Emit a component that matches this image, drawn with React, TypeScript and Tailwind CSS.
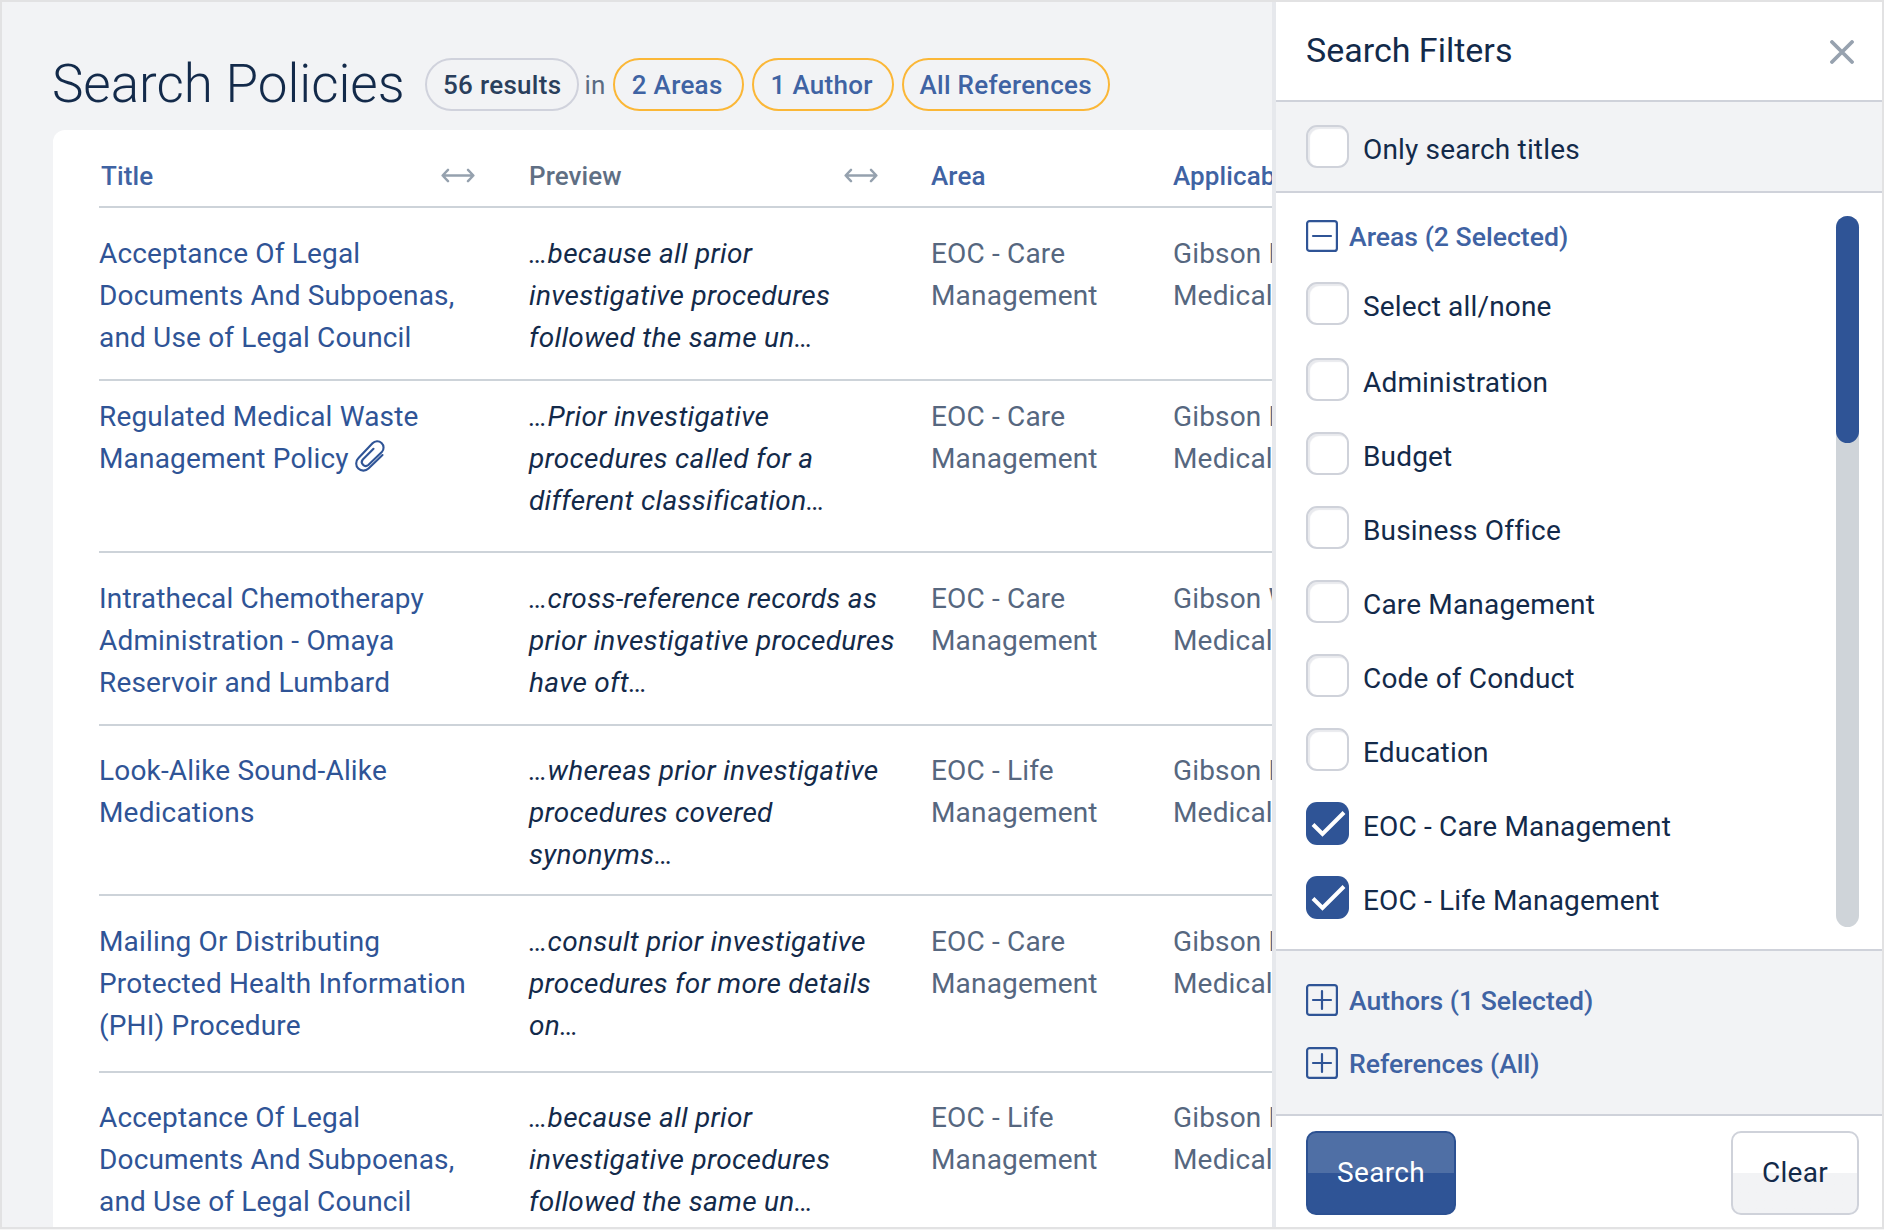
import { useState } from 'react';
import clsx from 'clsx';

type Policy = {
  title: string[];
  preview: string[];
  area: string[];
  applicability: string[];
  attachment?: boolean;
  rowClass: string;
};

const policies: Policy[] = [
  {
    title: ['Acceptance Of Legal', 'Documents And Subpoenas,', 'and Use of Legal Council'],
    preview: ['…because all prior', 'investigative procedures', 'followed the same un…'],
    area: ['EOC - Care', 'Management'],
    applicability: ['Gibson Men’s', 'Medical Center'],
    rowClass: 'h-[173px] pt-[25px]',
  },
  {
    title: ['Regulated Medical Waste', 'Management Policy'],
    preview: ['…Prior investigative', 'procedures called for a', 'different classification…'],
    area: ['EOC - Care', 'Management'],
    applicability: ['Gibson Men’s', 'Medical Center'],
    attachment: true,
    rowClass: 'h-[172px] pt-[15px]',
  },
  {
    title: ['Intrathecal Chemotherapy', 'Administration - Omaya', 'Reservoir and Lumbard'],
    preview: ['…cross-reference records as', 'prior investigative procedures', 'have oft…'],
    area: ['EOC - Care', 'Management'],
    applicability: ['Gibson Women’s', 'Medical Center'],
    rowClass: 'h-[173px] pt-[25px]',
  },
  {
    title: ['Look-Alike Sound-Alike', 'Medications'],
    preview: ['…whereas prior investigative', 'procedures covered', 'synonyms…'],
    area: ['EOC - Life', 'Management'],
    applicability: ['Gibson Men’s', 'Medical Center'],
    rowClass: 'h-[170px] pt-[24px]',
  },
  {
    title: ['Mailing Or Distributing', 'Protected Health Information', '(PHI) Procedure'],
    preview: ['…consult prior investigative', 'procedures for more details', 'on…'],
    area: ['EOC - Care', 'Management'],
    applicability: ['Gibson Men’s', 'Medical Center'],
    rowClass: 'h-[177px] pt-[25px]',
  },
  {
    title: ['Acceptance Of Legal', 'Documents And Subpoenas,', 'and Use of Legal Council'],
    preview: ['…because all prior', 'investigative procedures', 'followed the same un…'],
    area: ['EOC - Life', 'Management'],
    applicability: ['Gibson Men’s', 'Medical Center'],
    rowClass: 'h-[173px] pt-[24px]',
  },
];

const areas = [
  'Administration',
  'Budget',
  'Business Office',
  'Care Management',
  'Code of Conduct',
  'Education',
  'EOC - Care Management',
  'EOC - Life Management',
];

const columns = 'grid grid-cols-[430px_402px_242px_300px]';

function ResizeIcon() {
  return (
    <svg className="h-[15px] w-[34px] shrink-0" viewBox="0 0 34 15" fill="none" stroke="#95a1ae" strokeWidth="2.4" strokeLinecap="round" strokeLinejoin="round">
      <path d="M1.8 7.5h30.4M7 1.8 1.6 7.5 7 13.2M27 1.8l5.4 5.7-5.4 5.7" />
    </svg>
  );
}

function PaperclipIcon() {
  return (
    <svg className="ml-[6px] inline-block h-[34px] w-[30px] align-[-5px]" viewBox="0 0 30 34" fill="none" stroke="#2f5496" strokeWidth="2.1" strokeLinecap="round" strokeLinejoin="round">
      <path d="M27.5 16 13.5 29.5A7.2 7.2 0 0 1 3.3 19.3L17.5 4.2A6.4 6.4 0 0 1 26.8 13L13.3 26A3.9 3.9 0 0 1 7.8 20.5L18.5 9.8" />
    </svg>
  );
}

function Lines({ lines }: { lines: string[] }) {
  return (
    <>
      {lines.map((line) => (
        <span key={line} className="block whitespace-nowrap">
          {line}
        </span>
      ))}
    </>
  );
}

function Pill({ children, className }: { children: string; className: string }) {
  return (
    <button
      className={clsx(
        'h-[53px] rounded-full border-2 border-[#fbb737] pt-[2px] font-medium whitespace-nowrap text-[#3f63a3]',
        className,
      )}
    >
      {children}
    </button>
  );
}

function Checkbox({ label, checked, onChange }: { label: string; checked: boolean; onChange: () => void }) {
  return (
    <label className="flex h-[43px] items-center text-[28px] tracking-[0.17px] text-[#132a4a]">
      <input type="checkbox" className="sr-only" checked={checked} onChange={onChange} />
      <span
        className={clsx(
          'flex size-[43px] shrink-0 items-center justify-center rounded-[11px]',
          checked
            ? 'bg-[#2f5496]'
            : 'border-2 border-[#cfd2da] bg-white shadow-[inset_2px_2px_1px_#e9eaee]',
        )}
      >
        {checked && (
          <svg className="size-[43px]" viewBox="0 0 43 43" fill="none" stroke="#fff" strokeWidth="4">
            <path d="M7 22.5 16.5 32 38 10.5" />
          </svg>
        )}
      </span>
      <span className="mt-[6px] ml-[14px] whitespace-nowrap">{label}</span>
    </label>
  );
}

function SectionToggle({ label, open }: { label: string; open?: boolean }) {
  return (
    <button className="flex h-8 items-center gap-[11px] text-[26.6px] font-medium text-[#3f63a3]">
      <svg className="size-8" viewBox="0 0 32 32" fill="none" stroke="#2f5496" strokeWidth="2.2">
        <rect x="1.1" y="1.1" width="29.8" height="29.8" rx="2.5" />
        <path d={open ? 'M7 16h18' : 'M7 16h18M16 7v18'} strokeLinecap="round" />
      </svg>
      <span className="mt-[2px] whitespace-nowrap">{label}</span>
    </button>
  );
}

function Results() {
  return (
    <main className="w-[1270px] shrink-0 overflow-hidden pt-[56px] pl-[51px]">
      <div className="flex h-[53px] items-center text-[26px] tracking-[0.3px]">
        <h1 className="-ml-px w-[373px] shrink-0 text-[53px] font-light tracking-[-0.05px] whitespace-nowrap text-[#132a4a]">
          Search Policies
        </h1>
        <span className="flex h-[53px] items-center rounded-full border-2 border-[#d0d2dc] px-[16px] pt-[2px] font-medium whitespace-nowrap text-[#2a3f5c]">
          56 results
        </span>
        <span className="mr-[7px] ml-[5px] pt-[2px] text-[#5a6b82]">in</span>
        <div className="flex gap-2">
          <Pill className="w-[131px] pr-[2px]">2 Areas</Pill>
          <Pill className="w-[142px] pr-[2px]">1 Author</Pill>
          <Pill className="w-[208px]">All References</Pill>
        </div>
      </div>

      <div className="mt-[19px] h-[1100px] w-[1500px] rounded-tl-xl bg-white pl-[46px]">
        <div className={clsx(columns, 'h-[78px] items-center border-b-2 border-[#cdd3d9] pt-[15px] text-[26px] font-medium tracking-[0.1px] text-[#3f63a3]')}>
          <div className="flex items-center justify-between pr-[54px]">
            <span className="pt-[2px] pl-[2px]">Title</span>
            <ResizeIcon />
          </div>
          <div className="flex items-center justify-between pr-[53px]">
            <span className="pt-[2px] text-[#5f6f84]">Preview</span>
            <ResizeIcon />
          </div>
          <span className="pt-[2px]">Area</span>
          <span className="pt-[2px]">Applicability</span>
        </div>

        {policies.map((policy, i) => (
          <div
            key={i}
            className={clsx(
              columns,
              policy.rowClass,
              'border-b-2 border-[#cdd3d9] text-[28px] leading-[42px] tracking-[0.17px] text-[#56677f]',
            )}
          >
            <a className="text-[#2f5496]">
              {policy.title.map((line, n) => (
                <span key={line} className="block h-[42px] whitespace-nowrap">
                  {line}
                  {policy.attachment && n === policy.title.length - 1 && <PaperclipIcon />}
                </span>
              ))}
            </a>
            <p className="tracking-[0.3px] text-[#132a4a] italic">
              <Lines lines={policy.preview} />
            </p>
            <p>
              <Lines lines={policy.area} />
            </p>
            <p>
              <Lines lines={policy.applicability} />
            </p>
          </div>
        ))}
      </div>
    </main>
  );
}

export default function App() {
  const [titlesOnly, setTitlesOnly] = useState(false);
  const [selected, setSelected] = useState(['EOC - Care Management', 'EOC - Life Management']);

  function toggle(area: string) {
    setSelected((prev) => (prev.includes(area) ? prev.filter((a) => a !== area) : [...prev, area]));
  }

  return (
    <div className="h-[1230px] w-[1884px] overflow-hidden bg-[#f5f5f5]">
      <div className="flex h-[1229px] overflow-hidden border-2 border-[#e2e2e3] bg-[#f2f3f5] font-[Roboto,sans-serif]">
        <Results />

        <aside className="flex w-[610px] shrink-0 flex-col border-l-4 border-[#e6e8ec] bg-white">
          <header className="flex h-[100px] items-center justify-between border-b-2 border-[#cfd2da] pr-[28px] pl-[30px]">
            <h2 className="-mt-[2px] text-[34px] text-[#132a4a]">Search Filters</h2>
            <button aria-label="Close" className="mt-[2px]">
              <svg className="size-[24px]" viewBox="0 0 24 24" fill="none" stroke="#97a2af" strokeWidth="3.8" strokeLinecap="round">
                <path d="M2 2l20 20M22 2 2 22" />
              </svg>
            </button>
          </header>

          <div className="h-[91px] border-b-2 border-[#cfd2da] bg-[#f2f3f5] pt-[23px] pl-[30px]">
            <Checkbox label="Only search titles" checked={titlesOnly} onChange={() => setTitlesOnly(!titlesOnly)} />
          </div>

          <section className="flex h-[758px] justify-between border-b-2 border-[#cfd2da] pt-[23px] pr-[23px] pl-[30px]">
            <div className="pt-[4px]">
              <SectionToggle label="Areas (2 Selected)" open />
              <div className="mt-[30px] mb-[33px]">
                <Checkbox
                  label="Select all/none"
                  checked={selected.length === areas.length}
                  onChange={() => setSelected(selected.length === areas.length ? [] : areas)}
                />
              </div>
              <div className="flex flex-col gap-[31px]">
                {areas.map((area) => (
                  <Checkbox key={area} label={area} checked={selected.includes(area)} onChange={() => toggle(area)} />
                ))}
              </div>
            </div>
            <div className="h-[711px] w-[23px] rounded-full bg-[#cfd4d9]">
              <div className="h-[227px] rounded-full bg-[#2f5496]" />
            </div>
          </section>

          <section className="flex h-[165px] flex-col gap-[31px] border-b-2 border-[#cfd2da] bg-[#f2f3f5] pt-[33px] pl-[30px]">
            <SectionToggle label="Authors (1 Selected)" />
            <SectionToggle label="References (All)" />
          </section>

          <footer className="flex justify-between pt-[15px] pr-[23px] pl-[30px] text-[28px] tracking-[0.3px]">
            <button className="h-[84px] w-[150px] rounded-[10px] border-2 border-[#2c5192] bg-linear-to-b from-[#4f6fa5] from-50% to-[#2f5496] to-50% text-white">
              Search
            </button>
            <button className="h-[84px] w-[128px] rounded-[10px] border-2 border-[#cfd2da] bg-linear-to-b from-white from-50% to-[#f2f3f5] to-50% text-[#132a4a]">
              Clear
            </button>
          </footer>
        </aside>
      </div>
    </div>
  );
}
